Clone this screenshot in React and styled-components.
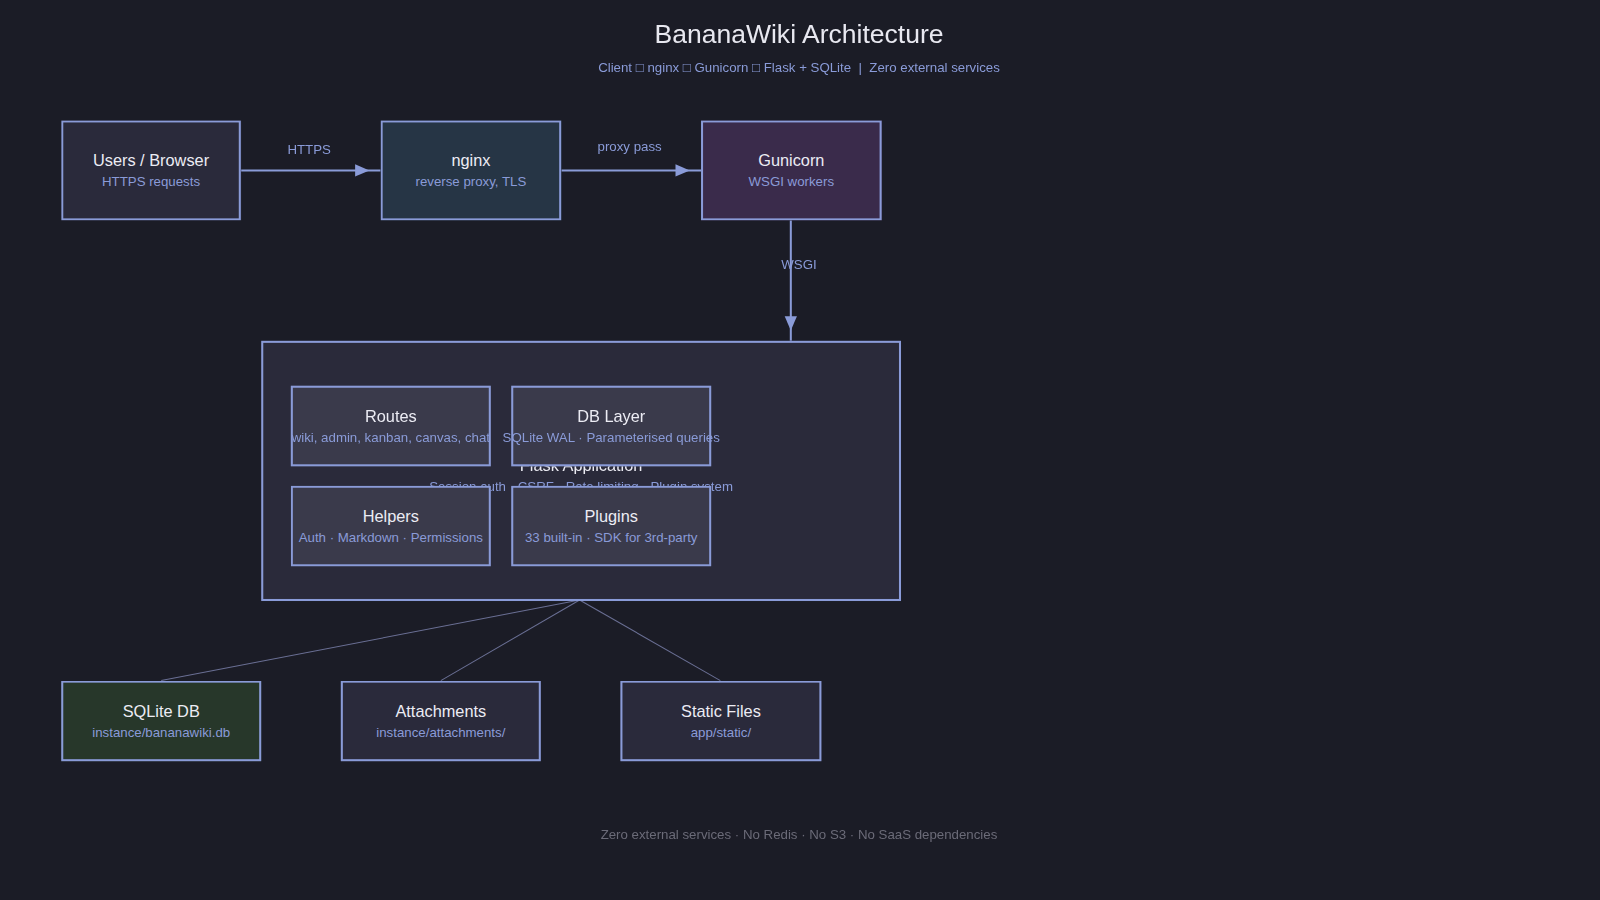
import React from "react";
import styled, { createGlobalStyle } from "styled-components";

const Global = createGlobalStyle`
  html, body { margin: 0; background: #1b1c26; overflow: hidden; }
  body { font-family: "Liberation Sans Narrow", "Liberation Sans", Arial, sans-serif; }
`;

const Page = styled.div`
  width: 1600px;
  height: 900px;
  background: #1b1c26;
  overflow: hidden;
`;

const Canvas = styled.div`
  position: relative;
  width: 1568px;
  height: 882px;
  transform: scale(1.0204);
  transform-origin: 0 0;
`;

const Header = styled.header`
  display: flex;
  flex-direction: column;
  align-items: center;
  padding-top: 18px;
  margin-left: 0;
  width: 1566px;
`;

const Title = styled.h1`
  margin: 0;
  font-family: "Liberation Sans", Arial, sans-serif;
  font-weight: 400;
  font-size: 26px;
  color: #e8e8f0;
`;

const Subtitle = styled.div`
  margin-top: 10px;
  font-size: 13px;
  color: #8a9bd8;
  white-space: pre;
`;

const Links = styled.svg`
  position: absolute;
  left: 0;
  top: 0;
`;

const Node = styled.div`
  position: absolute;
  box-sizing: border-box;
  border: 2px solid #8a9bd8;
  background: ${(p) => p.$bg};
  display: flex;
  flex-direction: column;
  align-items: center;
  justify-content: center;
  gap: 3px;
  white-space: nowrap;
`;

const NodeTitle = styled.div`
  font-size: 16px;
  color: #ececf4;
`;

const NodeSub = styled.div`
  font-size: 13px;
  color: #8a9bd8;
`;

const Group = styled.div`
  position: absolute;
  box-sizing: border-box;
  border: 2px solid #8a9bd8;
  background: #2a2a3a;
`;

const GroupLabel = styled.div`
  position: absolute;
  left: 0;
  right: 0;
  top: 112px;
  display: flex;
  flex-direction: column;
  align-items: center;
  gap: 3px;
`;

const EdgeLabel = styled.div`
  position: absolute;
  font-size: 13px;
  color: #8a9bd8;
  transform: translateX(-50%);
`;

const Footer = styled.div`
  position: absolute;
  left: 0;
  width: 1566px;
  top: 810px;
  text-align: center;
  font-size: 13px;
  color: #6b6b78;
`;

const box = (x1, y1, x2, y2) => ({ left: x1, top: y1, width: x2 - x1, height: y2 - y1 });

const nodes = [
  { t: "Users / Browser", s: "HTTPS requests", r: [60, 118, 236, 216], bg: "#2a2a3b" },
  { t: "nginx", s: "reverse proxy, TLS", r: [373, 118, 550, 216], bg: "#263545" },
  { t: "Gunicorn", s: "WSGI workers", r: [687, 118, 864, 216], bg: "#3a2b4b" },
  { t: "SQLite DB", s: "instance/bananawiki.db", r: [60, 667, 256, 746], bg: "#27372a" },
  { t: "Attachments", s: "instance/attachments/", r: [334, 667, 530, 746], bg: "#2a2a3b" },
  { t: "Static Files", s: "app/static/", r: [608, 667, 805, 746], bg: "#2a2a3b" },
];

const inner = [
  { t: "Routes", s: "wiki, admin, kanban, canvas, chat", r: [285, 378, 481, 457] },
  { t: "DB Layer", s: "SQLite WAL · Parameterised queries", r: [501, 378, 697, 457] },
  { t: "Helpers", s: "Auth · Markdown · Permissions", r: [285, 476, 481, 555] },
  { t: "Plugins", s: "33 built-in · SDK for 3rd-party", r: [501, 476, 697, 555] },
];

export default function App() {
  return (
    <Page>
      <Global />
      <Canvas>
        <Header>
          <Title>BananaWiki Architecture</Title>
          <Subtitle>{"Client \u25a1 nginx \u25a1 Gunicorn \u25a1 Flask + SQLite  |  Zero external services"}</Subtitle>
        </Header>

        <Links width="1568" height="882">
          <g stroke="#8a9bd8" strokeWidth="2" fill="#8a9bd8">
            <line x1="236" y1="167" x2="373" y2="167" />
            <polygon points="362,167 348,161 348,173" stroke="none" />
            <line x1="550" y1="167" x2="687" y2="167" />
            <polygon points="676,167 662,161 662,173" stroke="none" />
            <line x1="775" y1="216" x2="775" y2="334" />
            <polygon points="775,324 769,310 781,310" stroke="none" />
          </g>
          <g stroke="#6a6f94" strokeWidth="1">
            <line x1="568" y1="588" x2="158" y2="667" />
            <line x1="568" y1="588" x2="432" y2="667" />
            <line x1="568" y1="588" x2="706" y2="667" />
          </g>
        </Links>

        <EdgeLabel style={{ left: 303, top: 139 }}>HTTPS</EdgeLabel>
        <EdgeLabel style={{ left: 617, top: 136 }}>proxy pass</EdgeLabel>
        <EdgeLabel style={{ left: 783, top: 252 }}>WSGI</EdgeLabel>

        <Group style={box(256, 334, 883, 589)}>
          <GroupLabel>
            <NodeTitle>Flask Application</NodeTitle>
            <NodeSub>Session auth · CSRF · Rate limiting · Plugin system</NodeSub>
          </GroupLabel>
        </Group>

        {inner.map((n) => (
          <Node key={n.t} $bg="#3a3a4b" style={box(...n.r)}>
            <NodeTitle>{n.t}</NodeTitle>
            <NodeSub>{n.s}</NodeSub>
          </Node>
        ))}

        {nodes.map((n) => (
          <Node key={n.t} $bg={n.bg} style={box(...n.r)}>
            <NodeTitle>{n.t}</NodeTitle>
            <NodeSub>{n.s}</NodeSub>
          </Node>
        ))}

        <Footer>Zero external services · No Redis · No S3 · No SaaS dependencies</Footer>
      </Canvas>
    </Page>
  );
}
